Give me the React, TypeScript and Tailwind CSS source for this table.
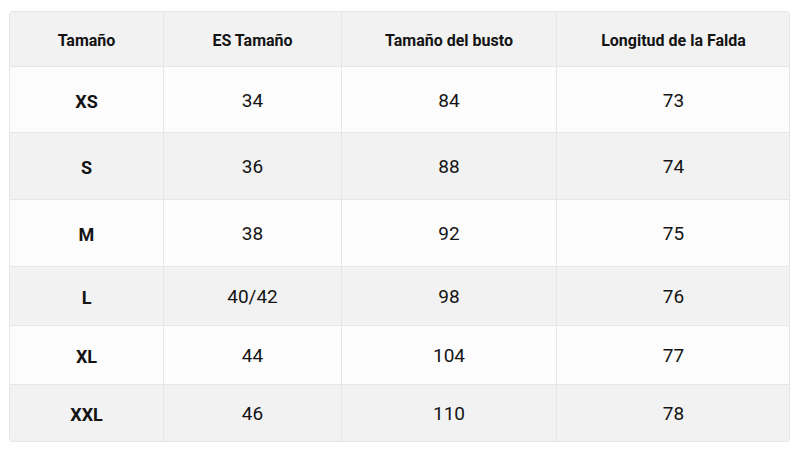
import React from "react";

const rows = [
  ["XS", "34", "84", "73", "h-[66px]", "bg-[#fcfcfc]"],
  ["S", "36", "88", "74", "h-[67px]", "bg-[#f2f2f2]"],
  ["M", "38", "92", "75", "h-[67px]", "bg-[#fcfcfc]"],
  ["L", "40/42", "98", "76", "h-[59px]", "bg-[#f2f2f2]"],
  ["XL", "44", "104", "77", "h-[59px]", "bg-[#fcfcfc]"],
  ["XXL", "46", "110", "78", "h-[56px]", "bg-[#f2f2f2]"],
];

const cols = "grid grid-cols-[154px_178px_215px_233px]";

export default function App() {
  return (
    <div className="w-[800px] h-[452px] bg-white pt-[11px] pl-[9px]" style={{ fontFamily: "Roboto, 'Noto Sans', sans-serif" }}>
      <div className="w-[781px] border border-[#e6e6e6] rounded-[3px] overflow-hidden text-[#141414]">
        <div className={`${cols} h-[55px] bg-[#f2f2f2] border-b border-[#e6e6e6] text-[16px] font-bold`}>
          {["Tamaño", "ES Tamaño", "Tamaño del busto", "Longitud de la Falda"].map((h, i) => (
            <div key={i} className={`flex items-center justify-center pt-[3px] ${i < 3 ? "border-r border-[#e6e6e6]" : ""}`}>{h}</div>
          ))}
        </div>
        {rows.map((r, ri) => (
          <div key={ri} className={`${cols} ${r[4]} ${r[5]} ${ri < rows.length - 1 ? "border-b border-[#e6e6e6]" : ""}`}>
            {r.slice(0, 4).map((c, i) => (
              <div key={i} className={`flex items-center justify-center pt-[3px] ${i === 0 ? "font-bold text-[18px]" : "text-[19px]"} ${i < 3 ? "border-r border-[#e6e6e6]" : ""}`}>{c}</div>
            ))}
          </div>
        ))}
      </div>
    </div>
  );
}
